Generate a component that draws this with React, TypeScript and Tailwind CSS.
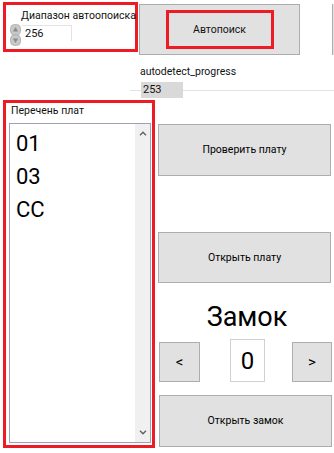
import React from 'react';

const RED = 'border-[#ed1c24]';

function WinButton({ label, className = '' }: { label: string; className?: string }) {
  return (
    <div
      className={`flex items-center justify-center bg-[#e1e1e1] border border-[#adadad] text-black ${className}`}
    >
      {label}
    </div>
  );
}

function Spinner() {
  return (
    <svg width="11" height="22" viewBox="0 0 11 22" className="shrink-0">
      <rect x="0.5" y="0.5" width="10" height="10.5" rx="4" fill="#c8c8c8" stroke="#b5b5b5" />
      <rect x="0.5" y="11" width="10" height="10.5" rx="4" fill="#c8c8c8" stroke="#b5b5b5" />
      <path d="M5.5 3 L8 7.5 L3 7.5 Z" fill="#8a8a8a" />
      <path d="M5.5 19 L8 14.5 L3 14.5 Z" fill="#8a8a8a" />
    </svg>
  );
}

function Chevron({ up }: { up?: boolean }) {
  return (
    <svg width="8" height="5" viewBox="0 0 8 5">
      <path
        d={up ? 'M1 4.2 L4 1.2 L7 4.2' : 'M1 0.8 L4 3.8 L7 0.8'}
        fill="none"
        stroke="#606060"
        strokeWidth="1.4"
      />
    </svg>
  );
}

export default function App() {
  const boards = ['01', '03', 'CC'];

  return (
    <div
      className="w-[334px] h-[453px] bg-white overflow-hidden text-[#111] text-[10.5px] leading-[16px]"
      style={{ fontFamily: 'Roboto, "Noto Sans", sans-serif' }}
    >
      {/* top row */}
      <div className="flex items-start h-[60px]">
        <div className={`ml-[3px] mt-[2px] w-[135px] h-[50px] border-[3px] ${RED} flex flex-col`}>
          <div className="pl-[15px] pt-[3px] whitespace-nowrap">Диапазон автоопоиска</div>
          <div className="flex items-start pl-[4px]">
            <Spinner />
            <div className="ml-[1px] mt-[1px] w-[50px] h-[16px] border-t border-r border-[#e3e3e3] pl-[3px] leading-[15px] text-[11px]">
              256
            </div>
          </div>
        </div>

        <div className="ml-[1px] mt-[4px] w-[161px] h-[51px] bg-[#e1e1e1] border border-[#adadad] flex items-center justify-center">
          <div className={`w-[108px] h-[39px] border-[3px] ${RED} flex items-center justify-center`}>
            Автопоиск
          </div>
        </div>

        <div className="ml-auto mt-[4px] w-[2px] h-[51px] border-l border-[#adadad] bg-[#e1e1e1]" />
      </div>

      {/* progress row */}
      <div className="h-[40px] pl-[130px] pt-[4px]">
        <div className="pl-[10px] whitespace-nowrap">autodetect_progress</div>
        <div className="flex items-center mt-[2px]">
          <div className="w-[11px] h-px bg-[#e3e3e3]" />
          <div className="w-[42px] h-[16px] bg-[#d9d9d9] pl-[2px] leading-[16px] text-[11px]">253</div>
          <div className="flex-1 h-px bg-[#e3e3e3]" />
        </div>
      </div>

      {/* main area */}
      <div className="flex items-start">
        <div className={`ml-[3px] w-[152px] h-[348px] border-[3px] ${RED} flex flex-col`}>
          <div className="pl-[5px] whitespace-nowrap">Перечень плат</div>
          <div className="ml-[3px] mr-[1px] mt-[4px] h-[320px] border border-[#a0a0b4] flex">
            <div className="flex-1 pl-[6px] pt-[3px]">
              {boards.map((b) => (
                <div key={b} className="text-[22px] leading-[33px] text-black">
                  {b}
                </div>
              ))}
            </div>
            <div className="w-[15px] bg-[#f0f0f0] flex flex-col items-center justify-between py-[7px]">
              <Chevron up />
              <Chevron />
            </div>
          </div>
        </div>

        <div className="ml-[3px] w-[174px] flex flex-col">
          <WinButton label="Проверить плату" className="mt-[24px] w-[173px] h-[52px]" />
          <WinButton label="Открыть плату" className="mt-[56px] w-[173px] h-[51px]" />

          <div className="mt-[18px] text-[27px] leading-[32px] text-center pl-[4px] text-black">Замок</div>

          <div className="flex items-start mt-[6px]">
            <WinButton label="<" className="ml-[1px] mt-[3px] w-[41px] h-[40px] text-[15px]" />
            <div className="ml-[30px] w-[35px] h-[43px] border border-[#d0d0d0] bg-white flex items-center justify-center text-[24px] text-black">
              0
            </div>
            <WinButton label=">" className="ml-[27px] mt-[3px] w-[40px] h-[40px] text-[15px]" />
          </div>

          <WinButton label="Открыть замок" className="ml-[1px] mt-[13px] w-[173px] h-[52px]" />
        </div>
      </div>
    </div>
  );
}
